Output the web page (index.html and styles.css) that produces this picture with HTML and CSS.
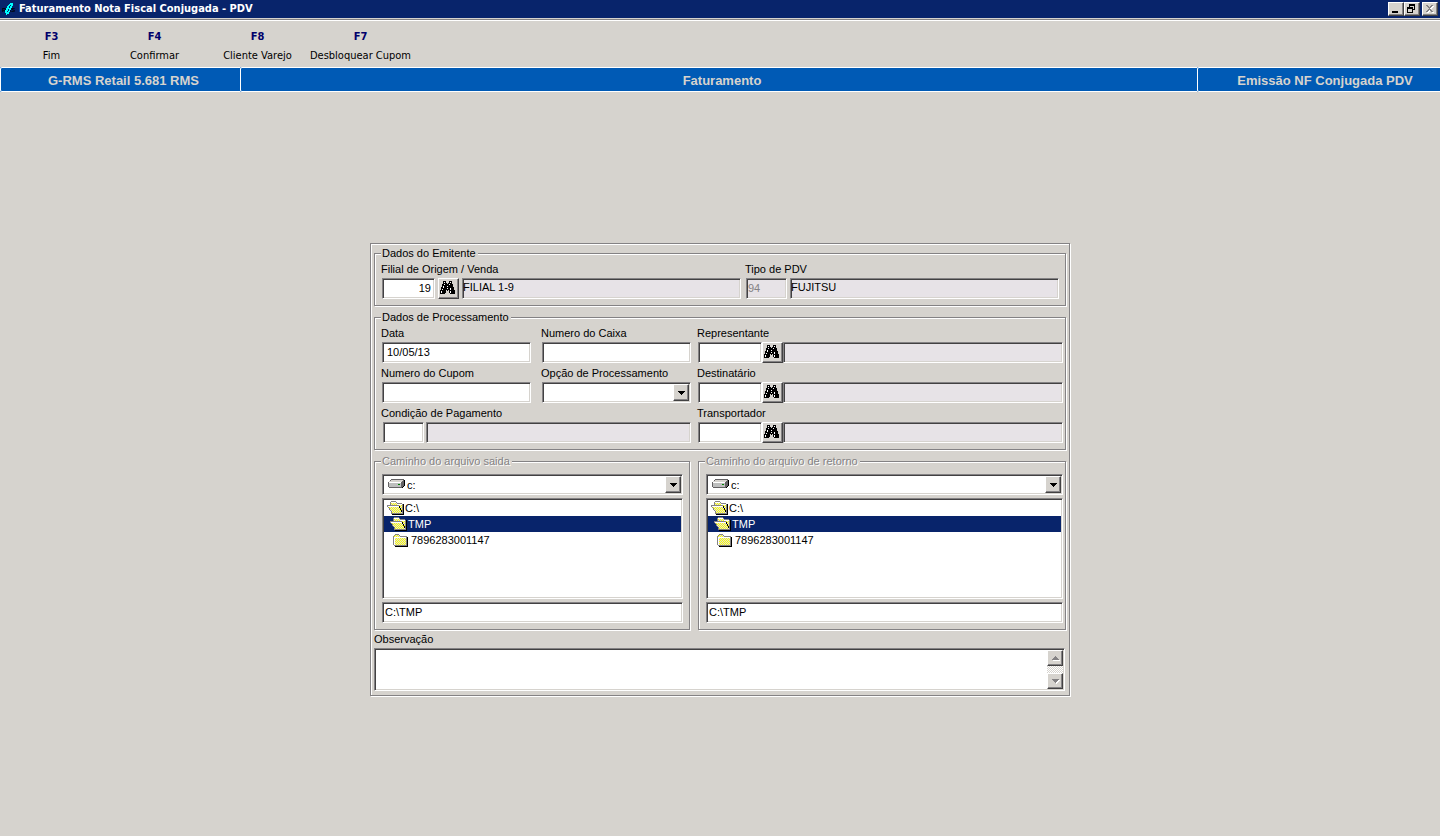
FILE: index.html
```html
<!DOCTYPE html>
<html lang="pt-BR">
<head>
<meta charset="utf-8">
<title>Faturamento Nota Fiscal Conjugada - PDV</title>
<link rel="stylesheet" href="styles.css">
</head>
<body>
<svg class="defs" aria-hidden="true">
  <defs>
    <pattern id="dither" width="2" height="2" patternUnits="userSpaceOnUse">
      <rect width="2" height="2" fill="#ffff00"/>
      <rect width="1" height="1" fill="#dedede"/><rect x="1" y="1" width="1" height="1" fill="#dedede"/>
    </pattern>
    <pattern id="dither-alt" width="2" height="2" patternUnits="userSpaceOnUse">
      <rect width="2" height="2" fill="#dedede"/>
      <rect width="1" height="1" fill="#ffff00"/><rect x="1" y="1" width="1" height="1" fill="#ffff00"/>
    </pattern>
    <symbol id="binoculars" viewBox="0 0 15 13">
      <path stroke="#000" d="M3 .5h3M9 .5h3M3 1.5h3M9 1.5h3M3 2.5h4M8 2.5h4M2 3.5h11M2 4.5h11M2 5.5h11M1 6.5h13M1 7.5h13M1 8.5h13M0 9.5h6M7 9.5h1M9 9.5h6M0 10.5h6M9 10.5h6M0 11.5h6M9 11.5h6M0 12.5h5M10 12.5h5"/>
      <path stroke="#fff" d="M4 1.5h1M10 1.5h1M4 3.5h1M9 3.5h1M3 5.5h1M7 5.5h1M3 6.5h1M7 7.5h1M10 7.5h1M2 8.5h1M10 8.5h1M1 10.5h1M10 10.5h1M1 11.5h1M10 11.5h1"/>
    </symbol>
    <symbol id="folder-open" viewBox="0 0 17 14">
      <path fill="#000" d="M16 3h1v11H5v-1h11z"/>
      <path fill="#848284" d="M3 1h1V0h5v1h1v1h5v1h1v10H4v-3H3V9H2V7H1V6H0V4h3z"/>
      <path fill="url(#dither-alt)" d="M4 1h5v1h1v1h5v8h-1V9h-1V7h-1V4H4z"/>
      <path fill="#fff" d="M4 1h5v1H4zM10 3h5v1h-5z"/>
      <path fill="#000" d="M12 5h1v2h1v2h1v2h-1V9h-1V7h-1z"/>
      <path fill="url(#dither-alt)" d="M2 6h10v1h1v2h1v2h1v1H5v-2H4V9H3V7H2z"/>
      <path fill="#fff" d="M1 5h11v1H1z"/>
    </symbol>
    <symbol id="folder" viewBox="0 0 15 13">
      <path fill="#000" d="M2 12h12V3h1v10H2z"/>
      <path fill="#848284" d="M0 2h1V1h1V0h4v1h1v1h7v10H1v-1H0z"/>
      <path fill="url(#dither)" d="M1 2h1V1h4v1h1v1h6v8H1z"/>
      <path fill="#fff" d="M1 3h12v1H2v7H1z"/>
    </symbol>
    <symbol id="drive" viewBox="0 0 17 10">
      <path fill="#000" d="M2 9h13V8h1V7h1V1h-1v6h-1v1h-1v1H2z"/>
      <path fill="#636163" d="M0 3h1V2h1V1h1V0h13v7h-1v1h-1v1H1V8H0z"/>
      <path fill="#d6d3ce" d="M3 1h12v1h-1v1H1V2h2z"/>
      <path fill="#fff" d="M1 3h12v1H1z"/>
      <path fill="#bdbebd" d="M1 4h12v4H1z"/>
      <path fill="#008200" d="M10 5h2v1h-2z"/>
    </symbol>
    <symbol id="arrow-down" viewBox="0 0 7 4"><path d="M0 0h7v1H6v1H5v1H4v1H3V3H2V2H1V1H0z"/></symbol>
    <symbol id="arrow-up" viewBox="0 0 7 4"><path d="M3 0h1v1h1v1h1v1h1v1H0V3h1V2h1V1h1z"/></symbol>
  </defs>
</svg>

<header class="titlebar">
  <svg class="app-icon" width="16" height="16" viewBox="0 0 16 16" aria-hidden="true">
    <text class="app-icon-text" x="0" y="11">RMS</text>
    <path fill="#00ffff" d="M8 2h3v3h-1v2H9v2H8v2H7v2H5v1H4v-2H3V9h1V7h1V5h1V4h1V3h1z"/>
    <path stroke="#08246b" d="M8.500 4v1M7.500 5v2M6.500 8v2M5.500 10v1"/>
  </svg>
  <h1 class="title">Faturamento Nota Fiscal Conjugada - PDV</h1>
  <div class="window-controls">
    <button class="win-btn" type="button" aria-label="Minimizar"><svg width="12" height="10" viewBox="0 0 12 10"><path d="M2 7h6v2H2z"/></svg></button>
    <button class="win-btn" type="button" aria-label="Restaurar"><svg width="12" height="10" viewBox="0 0 12 10"><path fill-rule="evenodd" d="M3 0h6v6H7v3H1V3h2zM4 2v1h3v2h1V2zM2 5v3h4V5z"/></svg></button>
    <button class="win-btn win-close" type="button" aria-label="Fechar" disabled><svg width="12" height="10" viewBox="0 0 12 10"><path fill="#fff" d="M3 2h2v1h1v1h1V3h1V2h2v1H9v1H8v1H7v1h1v1h1v1h1v1H8V8H7V7H6v1H5v1H3V8h1V7h1V6h1V5H5V4H4V3H3z"/><path fill="#848284" d="M2 1h2v1h1v1h1V2h1V1h2v1H8v1H7v1H6v1h1v1h1v1h1v1H7V7H6V6H5v1H4v1H2V7h1V6h1V5h1V4H4V3H3V2H2z"/></svg></button>
  </div>
</header>

<nav class="toolbar">
  <button class="tool" type="button"><b>F3</b><span>Fim</span></button>
  <button class="tool" type="button"><b>F4</b><span>Confirmar</span></button>
  <button class="tool" type="button"><b>F8</b><span>Cliente Varejo</span></button>
  <button class="tool" type="button"><b>F7</b><span>Desbloquear Cupom</span></button>
</nav>

<div class="banner">
  <div class="banner-cell banner-side">G-RMS Retail 5.681 RMS</div>
  <div class="banner-cell banner-main">Faturamento</div>
  <div class="banner-cell banner-side banner-last">Emissão NF Conjugada PDV</div>
</div>

<main class="workspace">
<form class="panel">
  <fieldset class="group">
    <legend>Dados do Emitente</legend>
    <div class="emitter">
      <div class="field emitter-branch">
        <label for="filial">Filial de Origem / Venda</label>
        <div class="line line-spaced">
          <input class="box code-branch" id="filial" value="19">
          <button class="lookup" type="button" aria-label="Buscar filial"><svg width="15" height="13"><use href="#binoculars"/></svg></button>
          <input class="box locked fill" aria-label="Nome da filial" value="FILIAL 1-9" readonly>
        </div>
      </div>
      <div class="field emitter-pdv">
        <label for="pdv">Tipo de PDV</label>
        <div class="line line-spaced">
          <input class="box locked code-pdv" id="pdv" value="94" disabled>
          <input class="box locked fill" aria-label="Nome do PDV" value="FUJITSU" readonly>
        </div>
      </div>
    </div>
  </fieldset>

  <fieldset class="group">
    <legend>Dados de Processamento</legend>
    <div class="processing">
      <div class="processing-left">
        <div class="field"><label for="data">Data</label><input class="box date" id="data" value="10/05/13"></div>
        <div class="field"><label for="caixa">Numero do Caixa</label><input class="box" id="caixa"></div>
        <div class="field"><label for="cupom">Numero do Cupom</label><input class="box" id="cupom"></div>
        <div class="field"><label for="opcao">Opção de Processamento</label>
          <div class="combo"><select class="box" id="opcao"><option></option></select><span class="combo-btn"><svg width="7" height="4"><use href="#arrow-down"/></svg></span></div>
        </div>
        <div class="field field-wide"><label for="condicao">Condição de Pagamento</label>
          <div class="line line-payment"><input class="box code-pay" id="condicao"><input class="box locked fill" aria-label="Descrição da condição" readonly></div>
        </div>
      </div>
      <div class="processing-right">
        <div class="field"><label for="repr">Representante</label>
          <div class="line"><input class="box code-person" id="repr"><button class="lookup" type="button" aria-label="Buscar representante"><svg width="15" height="13"><use href="#binoculars"/></svg></button><input class="box locked fill" aria-label="Nome do representante" readonly></div>
        </div>
        <div class="field"><label for="dest">Destinatário</label>
          <div class="line"><input class="box code-person" id="dest"><button class="lookup" type="button" aria-label="Buscar destinatário"><svg width="15" height="13"><use href="#binoculars"/></svg></button><input class="box locked fill" aria-label="Nome do destinatário" readonly></div>
        </div>
        <div class="field"><label for="transp">Transportador</label>
          <div class="line"><input class="box code-person" id="transp"><button class="lookup" type="button" aria-label="Buscar transportador"><svg width="15" height="13"><use href="#binoculars"/></svg></button><input class="box locked fill" aria-label="Nome do transportador" readonly></div>
        </div>
      </div>
    </div>
  </fieldset>

  <div class="paths">
    <fieldset class="group group-out">
      <legend class="dim">Caminho do arquivo saida</legend>
      <div class="browser">
        <div class="combo combo-drive"><svg class="drive" width="17" height="10"><use href="#drive"/></svg><select class="box" aria-label="Unidade de saída"><option>c:</option></select><span class="combo-btn"><svg width="7" height="4"><use href="#arrow-down"/></svg></span></div>
        <ul class="box tree" role="listbox" aria-label="Pastas de saída">
          <li class="level-0" role="option"><svg width="17" height="14"><use href="#folder-open"/></svg>C:\</li>
          <li class="level-1 selected" role="option" aria-selected="true"><svg width="17" height="14"><use href="#folder-open"/></svg>TMP</li>
          <li class="level-2" role="option"><svg width="15" height="13"><use href="#folder"/></svg>7896283001147</li>
        </ul>
        <input class="box" aria-label="Caminho de saída" value="C:\TMP">
      </div>
    </fieldset>
    <fieldset class="group group-in">
      <legend class="dim">Caminho do arquivo de retorno</legend>
      <div class="browser">
        <div class="combo combo-drive"><svg class="drive" width="17" height="10"><use href="#drive"/></svg><select class="box" aria-label="Unidade de retorno"><option>c:</option></select><span class="combo-btn"><svg width="7" height="4"><use href="#arrow-down"/></svg></span></div>
        <ul class="box tree" role="listbox" aria-label="Pastas de retorno">
          <li class="level-0" role="option"><svg width="17" height="14"><use href="#folder-open"/></svg>C:\</li>
          <li class="level-1 selected" role="option" aria-selected="true"><svg width="17" height="14"><use href="#folder-open"/></svg>TMP</li>
          <li class="level-2" role="option"><svg width="15" height="13"><use href="#folder"/></svg>7896283001147</li>
        </ul>
        <input class="box" aria-label="Caminho de retorno" value="C:\TMP">
      </div>
    </fieldset>
  </div>

  <div class="field notes">
    <label for="obs">Observação</label>
    <div class="box notes-box">
      <textarea id="obs"></textarea>
      <div class="scrollbar">
        <button type="button" aria-label="Rolar para cima" disabled><svg width="7" height="4"><use href="#arrow-up"/></svg></button>
        <button type="button" aria-label="Rolar para baixo" disabled><svg width="7" height="4"><use href="#arrow-down"/></svg></button>
      </div>
    </div>
  </div>
</form>
</main>
</body>
</html>
```
FILE: styles.css
```css
:root {
  --face: #d6d3ce;
  --shadow: #848284;
  --dark: #424142;
  --navy: #08246b;
  --blue: #005ab5;
  --locked: #e7e3e7;
  --tahoma: "DejaVu Sans Condensed", "DejaVu Sans", sans-serif;
  --arial: "Liberation Sans", Arial, sans-serif;
}
* { box-sizing: border-box; }
body {
  margin: 0;
  min-height: 100vh;
  background: var(--face);
  color: #000;
  font: 11px/13px var(--arial);
}
button, input, select, textarea { margin: 0; font: inherit; color: inherit; border-radius: 0; }
svg { display: block; shape-rendering: crispEdges; }
.defs { position: absolute; width: 0; height: 0; }

.titlebar {
  display: flex;
  align-items: center;
  height: 18px;
  padding: 0 2px;
  background: var(--navy);
  color: #fff;
}
.app-icon-text { font: bold 6px var(--arial); }
.title { flex: 1; margin: 0 0 0 1px; font: bold 11px/18px var(--tahoma); }
.window-controls { display: flex; }
.win-btn {
  width: 16px;
  height: 14px;
  padding: 1px;
  background: var(--face);
  border: 1px solid;
  border-color: #fff var(--dark) var(--dark) #fff;
  box-shadow: inset -1px -1px 0 var(--shadow);
}
.win-close { margin-left: 2px; }

.toolbar {
  display: flex;
  margin-top: 1px;
  padding: 10px 0 4px;
  border-top: 1px solid var(--shadow);
  box-shadow: inset 0 1px 0 #fff;
}
.tool {
  display: flex;
  flex-direction: column;
  align-items: center;
  gap: 5px;
  width: 103px;
  padding: 0;
  border: 0;
  background: none;
  font: 11px/14px var(--tahoma);
  white-space: nowrap;
}
.tool b { color: #00006b; }

.banner {
  display: flex;
  background: var(--blue);
  color: var(--face);
  font: bold 13px/21px var(--arial);
  text-align: center;
}
.banner-cell {
  padding: 2px 0 0 6px;
  border: 1px solid #fff;
  border-right: 0;
  border-radius: 2px 0 0 2px;
  white-space: nowrap;
}
.banner-side { flex: 0 0 240px; }
.banner-main { flex: 1; }
.banner-last { flex-basis: 243px; padding-left: 12px; }

.workspace { display: flex; justify-content: center; padding-top: 151px; }
.panel {
  display: flex;
  flex-direction: column;
  gap: 5px;
  width: 100%;
  max-width: 700px;
  padding: 3px 3px 4px;
  border: 1px solid var(--shadow);
  box-shadow: 1px 1px 0 #fff, inset 1px 1px 0 #fff;
}
.group {
  min-width: 0;
  margin: 0;
  padding: 3px 2px 6px 7px;
  border: 1px solid var(--shadow);
  box-shadow: 1px 1px 0 #fff, inset 1px 1px 0 #fff;
}
legend { margin-left: -1px; padding: 0 2px 0 1px; background: var(--face); }
.dim { color: var(--shadow); text-shadow: 1px 1px 0 #fff; }

.field { display: flex; flex-direction: column; gap: 2px; min-width: 0; }
.field label { margin-left: -1px; }
.line { display: flex; }
.line-spaced { gap: 3px; }
.line-payment { gap: 2px; padding-left: 1px; }
.fill { flex: 1; min-width: 0; }

.box {
  height: 21px;
  padding: 0 2px 2px;
  background: #fff;
  border: 1px solid;
  border-color: var(--shadow) #fff #fff var(--shadow);
  box-shadow: inset 1px 1px 0 var(--dark), inset -1px -1px 0 var(--face);
  outline: 0;
}
.field > .box { width: 100%; }
.locked { padding: 0 0 4px; background: var(--locked); }
.locked:disabled { padding: 0 1px 2px; color: var(--shadow); }
.date { padding-left: 4px; }
.code-branch { width: 53px; padding-right: 3px; text-align: right; }
.code-pdv { width: 41px; }
.code-pay { width: 41px; }
.code-person { width: 64px; }
.lookup {
  display: flex;
  align-items: flex-start;
  width: 21px;
  height: 21px;
  padding: 2px 1px;
  background: var(--face);
  border: 1px solid;
  border-color: #fff var(--dark) var(--dark) #fff;
  box-shadow: inset -1px -1px 0 var(--shadow);
}

.emitter { display: flex; gap: 5px; padding-right: 4px; }
.emitter-branch { flex: 359; }
.emitter-pdv { flex: 313; }

.processing { display: flex; gap: 7px; }
.processing-left {
  flex: 309;
  display: grid;
  grid-template-columns: 1fr 1fr;
  gap: 4px 11px;
}
.processing-right { flex: 365; display: grid; gap: 4px; }
.field-wide { grid-column: span 2; }

.combo { position: relative; display: flex; }
.combo select { flex: 1; padding-top: 1px; padding-bottom: 0; appearance: none; }
.combo-drive select { padding-left: 24px; }
.combo-btn {
  position: absolute;
  top: 2px;
  right: 2px;
  bottom: 2px;
  width: 16px;
  display: grid;
  place-items: center;
  background: var(--face);
  border: 1px solid;
  border-color: #fff var(--dark) var(--dark) #fff;
  box-shadow: inset -1px -1px 0 var(--shadow);
  pointer-events: none;
}
.drive { position: absolute; top: 5px; left: 6px; pointer-events: none; }

.paths { display: flex; gap: 8px; }
.group-out { flex: 301; padding-right: 6px; }
.group-in { flex: 357; }
.browser { display: flex; flex-direction: column; gap: 3px; padding-top: 3px; }
.tree { height: 101px; margin: 0; padding: 1px; list-style: none; }
.tree li { display: flex; align-items: center; gap: 1px; height: 16px; }
.level-0 { padding-left: 3px; }
.level-1 { padding-left: 6px; }
.level-2 { padding-left: 9px; }
.level-2 svg { margin-right: 2px; }
.selected { background: var(--navy); color: #fff; }

.notes { margin-right: 1px; margin-top: -2px; }
.notes label { margin-left: 0; }
.notes-box { display: flex; height: 43px; padding: 1px; }
.notes-box textarea {
  flex: 1;
  padding: 2px;
  border: 0;
  outline: 0;
  background: none;
  resize: none;
  overflow: hidden;
}
.scrollbar {
  display: flex;
  flex-direction: column;
  justify-content: space-between;
  width: 16px;
  background: repeating-conic-gradient(#fff 0 25%, var(--face) 0 50%) 0 0 / 2px 2px;
}
.scrollbar button {
  display: grid;
  place-items: center;
  width: 16px;
  height: 16px;
  padding: 0;
  background: var(--face);
  border: 1px solid;
  border-color: #fff var(--dark) var(--dark) #fff;
  box-shadow: inset -1px -1px 0 var(--shadow);
  fill: var(--shadow);
}
.scrollbar svg { filter: drop-shadow(1px 1px 0 #fff); }
```
